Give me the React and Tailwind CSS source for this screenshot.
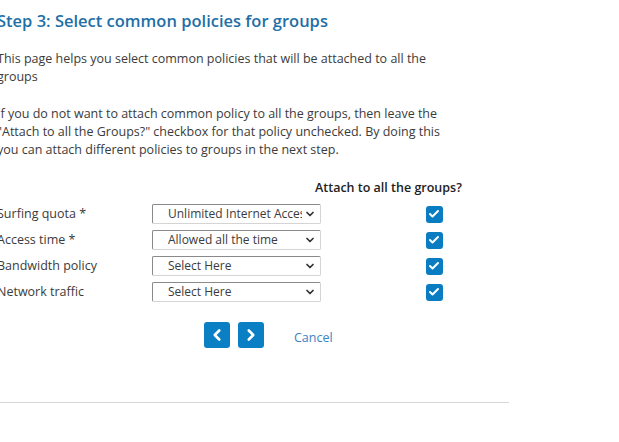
import { ChevronDown, ChevronLeft, ChevronRight, Check } from "lucide-react";

const rows = [
  { label: "Surfing quota *", value: "Unlimited Internet Access" },
  { label: "Access time *", value: "Allowed all the time" },
  { label: "Bandwidth policy", value: "Select Here" },
  { label: "Network traffic", value: "Select Here" },
];

const App = () => {
  return (
    <div className="w-[619px] h-[442px] bg-white overflow-hidden font-['Open_Sans',sans-serif] text-[#3b3b3b]">
      <div className="w-[512px] -ml-[3px]">
        <h1 className="pt-[9px] text-[16.5px] leading-6 font-semibold text-[#1f6fa6]">
          Step 3: Select common policies for groups
        </h1>
        <p className="mt-[17px] text-[12.5px] leading-[18px] w-[450px]">
          This page helps you select common policies that will be attached to all the groups
        </p>
        <p className="mt-[19px] text-[12.5px] leading-[18px] w-[450px]">
          If you do not want to attach common policy to all the groups, then leave the "Attach to all the Groups?" checkbox for that policy unchecked. By doing this you can attach different policies to groups in the next step.
        </p>
        <div className="mt-[21px] pl-[318px] text-[12.5px] leading-4 font-semibold text-[#222]">
          Attach to all the groups?
        </div>
        <div className="mt-[8px] flex flex-col gap-[6px]">
          {rows.map((r) => (
            <div key={r.label} className="flex items-center h-[20px] text-[12.5px]">
              <div className="w-[155px] shrink-0">{r.label}</div>
              <div className="w-[169px] h-[20px] shrink-0 flex items-center border border-[#d4d4d4] border-t-[#8a8a8a] border-l-[#8a8a8a] rounded-[2px] pl-[15px] pr-[4px]">
                <span className="flex-1 overflow-hidden whitespace-nowrap text-[12px]">{r.value}</span>
                <ChevronDown size={12} strokeWidth={3.5} className="text-[#333] ml-[2px]" />
              </div>
              <div className="flex-1 flex justify-center pl-[38px]">
                <span className="w-[17px] h-[17px] rounded-[3px] bg-[#0a7cc2] flex items-center justify-center">
                  <Check size={12} strokeWidth={4} className="text-white" />
                </span>
              </div>
            </div>
          ))}
        </div>
        <div className="mt-[20px] flex items-center pl-[207px]">
          <button className="w-[26px] h-[26px] rounded-[3px] bg-[#0a7fc4] flex items-center justify-center">
            <ChevronLeft size={18} strokeWidth={3.5} className="text-white" />
          </button>
          <button className="ml-[8px] w-[26px] h-[26px] rounded-[3px] bg-[#0a7fc4] flex items-center justify-center">
            <ChevronRight size={18} strokeWidth={3.5} className="text-white" />
          </button>
          <a className="ml-[30px] text-[12.5px] text-[#3d82c4] pt-[6px]">Cancel</a>
        </div>
        <div className="mt-[54px] h-px bg-[#d7d7d7]" />
      </div>
    </div>
  );
};

export default App;
